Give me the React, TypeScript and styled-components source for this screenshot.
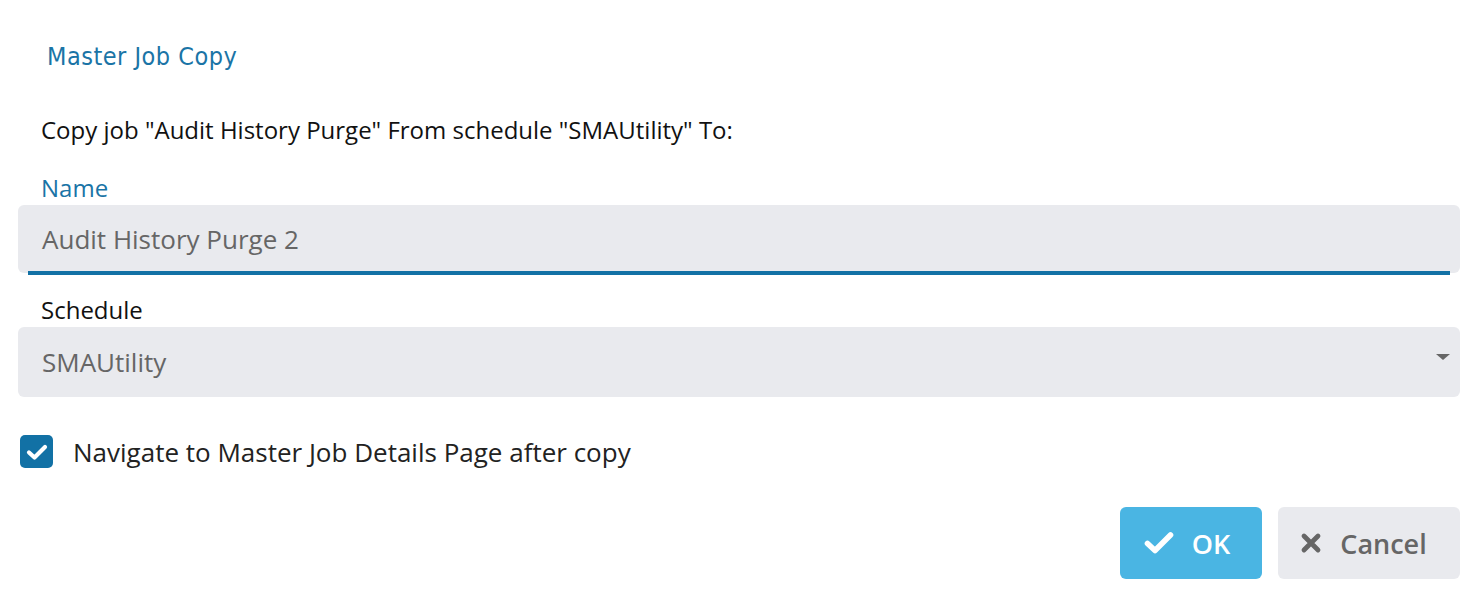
import React from "react";
import styled, { createGlobalStyle } from "styled-components";

const Global = createGlobalStyle`
  html, body { margin: 0; padding: 0; background: #ffffff; }
  body { font-family: "Open Sans", "Liberation Sans", sans-serif; }
`;

const Dialog = styled.div`
  width: 1476px;
  height: 598px;
  box-sizing: border-box;
  padding: 39px 16px 0 18px;
  display: flex;
  flex-direction: column;
`;

const Title = styled.h1`
  margin: 0 0 0 29px;
  font-family: "DejaVu Sans Condensed", "DejaVu Sans", sans-serif;
  font-weight: 400;
  font-size: 25px;
  line-height: 36px;
  color: #1a74a6;
  letter-spacing: 0.5px;
`;

const Description = styled.p`
  margin: 39px 0 0 23px;
  font-size: 24px;
  line-height: 32px;
  color: #111;
`;

const Label = styled.label<{ $accent?: boolean }>`
  display: block;
  margin: 0 0 1px 23px;
  font-size: 24px;
  line-height: 32px;
  color: ${(p) => (p.$accent ? "#1a74a6" : "#111")};
`;

const Field = styled.div<{ $gap: number }>`
  margin-top: ${(p) => p.$gap}px;
`;

const InputBox = styled.div`
  position: relative;
  height: 68px;
  background: #e9eaee;
  border-radius: 6px;
  display: flex;
  align-items: center;
  padding: 0 24px;
  font-size: 26px;
  color: #666;
  &::after {
    content: "";
    position: absolute;
    left: 10px;
    right: 10px;
    bottom: -2px;
    height: 4px;
    background: #1271a5;
  }
`;

const SelectBox = styled.div`
  height: 70px;
  background: #e9eaee;
  border-radius: 6px;
  display: flex;
  align-items: center;
  justify-content: space-between;
  padding: 0 10px 0 24px;
  font-size: 26px;
  color: #666;
`;

const Caret = styled.span`
  width: 0;
  height: 0;
  border-left: 7px solid transparent;
  border-right: 7px solid transparent;
  border-top: 6px solid #666;
  margin-top: -10px;
`;

const CheckRow = styled.div`
  display: flex;
  align-items: center;
  gap: 20px;
  height: 33px;
  margin: 38px 0 0 2px;
  font-size: 26px;
  color: #222;
`;

const CheckBox = styled.span`
  flex: none;
  width: 33px;
  height: 33px;
  border-radius: 5px;
  background: #1271a5;
  display: flex;
  align-items: center;
  justify-content: center;
`;

const Actions = styled.div`
  display: flex;
  justify-content: flex-end;
  gap: 16px;
  margin-top: 39px;
`;

const Button = styled.button<{ $primary?: boolean }>`
  height: 72px;
  border: none;
  border-radius: 6px;
  display: flex;
  align-items: center;
  justify-content: center;
  gap: 18px;
  font-family: "Open Sans", sans-serif;
  font-weight: 600;
  font-size: 27px;
  background: ${(p) => (p.$primary ? "#4ab5e3" : "#e9eaee")};
  color: ${(p) => (p.$primary ? "#ffffff" : "#666")};
  width: ${(p) => (p.$primary ? "142px" : "182px")};
  padding: ${(p) => (p.$primary ? "0 8px 0 0" : "0 11px 0 0")};
  cursor: pointer;
`;

export default function App() {
  return (
    <>
      <Global />
      <Dialog>
        <Title>Master Job Copy</Title>
        <Description>
          Copy job "Audit History Purge" From schedule "SMAUtility" To:
        </Description>
        <Field $gap={26}>
          <Label $accent>Name</Label>
          <InputBox>Audit History Purge 2</InputBox>
        </Field>
        <Field $gap={21}>
          <Label>Schedule</Label>
          <SelectBox>
            SMAUtility
            <Caret />
          </SelectBox>
        </Field>
        <CheckRow>
          <CheckBox>
            <svg width="22" height="18" viewBox="0 0 22 18">
              <path d="M3 9.5 L8.5 14.5 L19 4" fill="none" stroke="#fff" strokeWidth="4.2" strokeLinecap="round" strokeLinejoin="round" />
            </svg>
          </CheckBox>
          Navigate to Master Job Details Page after copy
        </CheckRow>
        <Actions>
          <Button $primary>
            <svg width="30" height="24" viewBox="0 0 30 24">
              <path d="M3.5 12.5 L11 19.5 L26.5 4" fill="none" stroke="#fff" strokeWidth="5.6" strokeLinecap="round" strokeLinejoin="round" />
            </svg>
            OK
          </Button>
          <Button>
            <svg width="22" height="22" viewBox="0 0 22 22">
              <path d="M4 4 L18 18 M18 4 L4 18" fill="none" stroke="#666" strokeWidth="4.8" strokeLinecap="round" />
            </svg>
            Cancel
          </Button>
        </Actions>
      </Dialog>
    </>
  );
}
